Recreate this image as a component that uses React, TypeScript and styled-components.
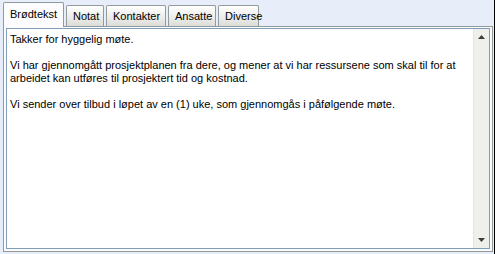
import React from "react";
import styled, { createGlobalStyle, css } from "styled-components";

const GlobalStyle = createGlobalStyle`
  html, body {
    margin: 0;
    padding: 0;
    width: 495px;
    height: 254px;
    overflow: hidden;
    background: #e8edfa;
  }
  #root {
    width: 495px;
    height: 254px;
  }
`;

const font = `"Liberation Sans", Arial, sans-serif`;

const Window = styled.div`
  width: 495px;
  height: 254px;
  box-sizing: border-box;
  border-right: 1px solid #000000;
  padding: 3px 1px 2px 3px;
  display: flex;
  flex-direction: column;
  font-family: ${font};
  font-size: 11px;
  color: #000000;
`;

const TabStrip = styled.div`
  display: flex;
  align-items: flex-end;
  height: 24px;
  position: relative;
  z-index: 1;
  margin-bottom: -1px;
`;

const Tab = styled.div<{ $active?: boolean; $width: number }>`
  width: ${(p) => p.$width}px;
  box-sizing: border-box;
  border: 1px solid #919b9c;
  border-bottom: none;
  border-radius: 2px 2px 0 0;
  display: flex;
  align-items: center;
  padding-left: 6px;
  white-space: nowrap;
  ${(p) =>
    p.$active
      ? css`
          height: 25px;
          background: #fcfcfe;
          padding-bottom: 2px;
        `
      : css`
          height: 21px;
          margin-bottom: 1px;
          margin-left: 2px;
          background: linear-gradient(#ffffff, #f2f2f0 40%, #dcdcd8);
          padding-bottom: 1px;
        `}
`;

const Panel = styled.div`
  flex: 1;
  box-sizing: border-box;
  border: 1px solid #919b9c;
  background: #fcfcfe;
  padding: 1px 2px 2px 2px;
  display: flex;
`;

const Memo = styled.div`
  flex: 1;
  box-sizing: border-box;
  border: 1px solid #7f9db9;
  background: #ffffff;
  display: flex;
`;

const MemoText = styled.div`
  flex: 1;
  padding: 4px 4px 0 3px;
  line-height: 13px;
`;

const Paragraph = styled.p`
  margin: 0 0 13px 0;
`;

const ScrollBar = styled.div`
  width: 15px;
  background: #efefec;
  border-left: 1px solid #e4e4e0;
  display: flex;
  flex-direction: column;
  justify-content: space-between;
`;

const ArrowButton = styled.div`
  height: 16px;
  display: flex;
  align-items: center;
  justify-content: center;
`;

const Arrow = ({ up }: { up?: boolean }) => (
  <svg width="7" height="4" viewBox="0 0 7 4">
    <path
      d={up ? "M3.5 0 L7 4 L0 4 Z" : "M0 0 L7 0 L3.5 4 Z"}
      fill="#3c3c3c"
    />
  </svg>
);

const tabs = [
  { label: "Brødtekst", width: 61 },
  { label: "Notat", width: 38 },
  { label: "Kontakter", width: 60 },
  { label: "Ansatte", width: 48 },
  { label: "Diverse", width: 41 },
];

export default function App() {
  return (
    <>
      <GlobalStyle />
      <Window>
        <TabStrip>
          {tabs.map((t, i) => (
            <Tab key={t.label} $active={i === 0} $width={t.width}>
              {t.label}
            </Tab>
          ))}
        </TabStrip>
        <Panel>
          <Memo>
            <MemoText>
              <Paragraph>Takker for hyggelig møte.</Paragraph>
              <Paragraph>
                Vi har gjennomgått prosjektplanen fra dere, og mener at vi har
                ressursene som skal til for at arbeidet kan utføres til
                prosjektert tid og kostnad.
              </Paragraph>
              <Paragraph>
                Vi sender over tilbud i løpet av en (1) uke, som gjennomgås i
                påfølgende møte.
              </Paragraph>
            </MemoText>
            <ScrollBar>
              <ArrowButton>
                <Arrow up />
              </ArrowButton>
              <ArrowButton>
                <Arrow />
              </ArrowButton>
            </ScrollBar>
          </Memo>
        </Panel>
      </Window>
    </>
  );
}
